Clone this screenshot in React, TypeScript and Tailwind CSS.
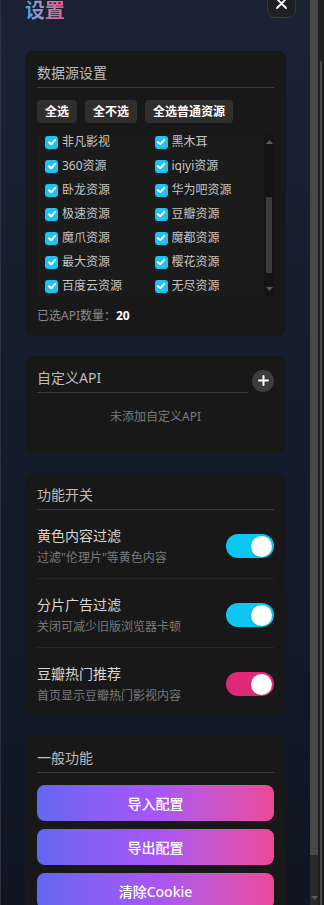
import { useEffect, useRef, useState } from "react";

const initialSources = [
  { name: "电影天堂资源", on: true },
  { name: "如意资源", on: true },
  { name: "暴风资源", on: true },
  { name: "天涯资源", on: true },
  { name: "小猫咪资源", on: true },
  { name: "量子资源", on: false },
  { name: "光速资源", on: false },
  { name: "红牛资源", on: true },
  { name: "非凡影视", on: true },
  { name: "黑木耳", on: true },
  { name: "360资源", on: true },
  { name: "iqiyi资源", on: true },
  { name: "卧龙资源", on: true },
  { name: "华为吧资源", on: true },
  { name: "极速资源", on: true },
  { name: "豆瓣资源", on: true },
  { name: "魔爪资源", on: true },
  { name: "魔都资源", on: true },
  { name: "最大资源", on: true },
  { name: "樱花资源", on: true },
  { name: "百度云资源", on: true },
  { name: "无尽资源", on: true },
  { name: "旺旺短剧", on: false },
  { name: "iKun资源", on: false },
];

function Arrow({ up }: { up?: boolean }) {
  return (
    <svg width="7" height="4" viewBox="0 0 7 4" className="mx-auto">
      <path d={up ? "M0 4 3.5 0 7 4Z" : "M0 0 3.5 4 7 0Z"} fill="#5a5a5a" />
    </svg>
  );
}

function Check({ on, onClick }: { on: boolean; onClick: () => void }) {
  return (
    <span
      onClick={onClick}
      className={
        on
          ? "flex h-[13px] w-[13px] shrink-0 items-center justify-center rounded-[3px] bg-[#1fc3ee]"
          : "flex h-[13px] w-[13px] shrink-0 items-center justify-center rounded-[3px] border border-[#777] bg-[#222]"
      }
    >
      {on && (
        <svg width="10" height="10" viewBox="0 0 10 10">
          <path d="M2 5.2 4.2 7.3 8.2 2.8" fill="none" stroke="#fff" strokeWidth="1.9" strokeLinecap="round" strokeLinejoin="round" />
        </svg>
      )}
    </span>
  );
}

function Toggle({ on, color, onClick }: { on: boolean; color: string; onClick: () => void }) {
  return (
    <button
      onClick={onClick}
      className={`flex h-6 w-12 shrink-0 items-center rounded-full px-[2px] ${on ? `justify-end ${color}` : "justify-start bg-[#3a3a3a]"}`}
    >
      <span className="h-[21px] w-[21px] rounded-full bg-white shadow" />
    </button>
  );
}

function CardTitle({ children }: { children: React.ReactNode }) {
  return (
    <h3 className="border-b border-[#3a3a3a] pb-1 text-[14px] leading-5 text-[#bdbdbd]">{children}</h3>
  );
}

export default function App() {
  const panelRef = useRef<HTMLDivElement>(null);
  const listRef = useRef<HTMLDivElement>(null);
  const [sources, setSources] = useState(initialSources);
  const [toggles, setToggles] = useState({ yellow: true, ads: true, douban: true });

  useEffect(() => {
    if (panelRef.current) panelRef.current.scrollTop = 27;
    if (listRef.current) listRef.current.scrollTop = 101;
  }, []);

  const count = sources.filter((s) => s.on).length;
  const setAll = (on: boolean) => setSources(sources.map((s) => ({ ...s, on })));

  const switches = [
    { key: "yellow" as const, title: "黄色内容过滤", desc: "过滤\"伦理片\"等黄色内容", color: "bg-[#0dc6f4]" },
    { key: "ads" as const, title: "分片广告过滤", desc: "关闭可减少旧版浏览器卡顿", color: "bg-[#0dc6f4]" },
    { key: "douban" as const, title: "豆瓣热门推荐", desc: "首页显示豆瓣热门影视内容", color: "bg-[#de2a78]" },
  ];

  return (
    <div
      className="flex h-[905px] w-[324px] overflow-hidden bg-[#1e1e1e]"
      style={{ fontFamily: '"Noto Sans", "Noto Sans CJK SC", sans-serif' }}
    >
      <div
        ref={panelRef}
        className="relative h-full w-[310px] shrink-0 overflow-hidden border-l border-[#2b3342] bg-linear-to-b from-[#1a2234] to-[#0f1622]"
      >
        <div className="p-6">
          <button className="absolute right-[14px] top-[16px] flex h-[29px] w-[29px] items-center justify-center rounded-lg border border-[#3a3a3a] bg-[#1f2024]">
            <svg width="11" height="11" viewBox="0 0 11 11">
              <path d="M1 1 10 10M10 1 1 10" stroke="#fff" strokeWidth="1.8" strokeLinecap="round" />
            </svg>
          </button>

          <h2 className="mb-[26px] w-fit bg-linear-to-r from-[#35a6e6] to-[#f0508c] bg-clip-text text-[20px] font-bold leading-7 text-transparent">
            设置
          </h2>

          <div className="flex flex-col gap-5">
            {/* data sources */}
            <section className="rounded-lg bg-[#181818] p-3">
              <CardTitle>数据源设置</CardTitle>
              <div className="mt-3 flex gap-2">
                <button onClick={() => setAll(true)} className="rounded bg-[#2e2e2e] px-2 py-1 text-[12px] font-semibold leading-[15px] text-white">
                  全选
                </button>
                <button onClick={() => setAll(false)} className="rounded bg-[#2e2e2e] px-2 py-1 text-[12px] font-semibold leading-[15px] text-white">
                  全不选
                </button>
                <button className="rounded bg-[#2e2e2e] px-2 py-1 text-[12px] font-semibold leading-[15px] text-white">
                  全选普通资源
                </button>
              </div>

              <div className="mt-3 flex h-[161px] bg-[#1b1b1b]">
                <div ref={listRef} className="flex-1 overflow-hidden pl-2">
                  <div className="grid grid-cols-2">
                    {sources.map((s, i) => (
                      <label key={s.name} className="flex h-6 items-center gap-1 text-[12px] text-[#c4c4c4]">
                        <Check
                          on={s.on}
                          onClick={() => setSources(sources.map((x, j) => (j === i ? { ...x, on: !x.on } : x)))}
                        />
                        <span className="truncate">{s.name}</span>
                      </label>
                    ))}
                  </div>
                </div>
                <div className="flex w-[10px] flex-col bg-[#141414] py-[5px]">
                  <Arrow up />
                  <div className="flex-1 px-[2px] pt-[6px]">
                    <div className="mt-[47px] h-[76px] bg-[#3c3c3c]" />
                  </div>
                  <Arrow />
                </div>
              </div>

              <p className="mt-3 text-[12px] leading-4 text-[#8a8a8a]">
                已选API数量：<span className="font-bold text-white">{count}</span>
              </p>
            </section>

            {/* custom api */}
            <section className="rounded-lg bg-[#181818] p-3">
              <div className="flex items-center gap-1">
                <div className="flex-1">
                  <CardTitle>自定义API</CardTitle>
                </div>
                <button className="flex h-[22px] w-[22px] items-center justify-center rounded-full bg-[#3d3d3d]">
                  <svg width="11" height="11" viewBox="0 0 11 11">
                    <path d="M5.5 1v9M1 5.5h9" stroke="#fff" strokeWidth="2" strokeLinecap="round" />
                  </svg>
                </button>
              </div>
              <p className="py-4 text-center text-[12px] leading-4 text-[#7a7a7a]">未添加自定义API</p>
            </section>

            {/* switches */}
            <section className="rounded-lg bg-[#181818] p-3">
              <CardTitle>功能开关</CardTitle>
              {switches.map((s, i) => (
                <div
                  key={s.key}
                  className={`flex items-center justify-between pt-4 ${i < switches.length - 1 ? "border-b border-[#262626] pb-3" : ""}`}
                >
                  <div>
                    <div className="text-[14px] leading-5 text-[#d6d6d6]">{s.title}</div>
                    <div className="mt-1 text-[12px] leading-4 text-[#7a7a7a]">{s.desc}</div>
                  </div>
                  <Toggle
                    on={toggles[s.key]}
                    color={s.color}
                    onClick={() => setToggles({ ...toggles, [s.key]: !toggles[s.key] })}
                  />
                </div>
              ))}
            </section>

            {/* general */}
            <section className="rounded-lg bg-[#181818] p-3">
              <CardTitle>一般功能</CardTitle>
              <div className="mt-3 flex flex-col gap-2">
                {["导入配置", "导出配置", "清除Cookie"].map((t) => (
                  <button
                    key={t}
                    className="h-9 rounded-lg bg-linear-to-r from-[#6366f1] via-[#a855f7] to-[#ec4899] text-[14px] font-medium text-white"
                  >
                    {t}
                  </button>
                ))}
              </div>
            </section>
          </div>
        </div>
      </div>

      {/* panel scrollbar */}
      <div className="flex h-full w-[8px] shrink-0 flex-col bg-[#2a2a2a]">
        <div className="h-[855px] bg-[#474747]" />
        <div className="flex flex-1 flex-col justify-end pb-[5px]">
          <Arrow />
        </div>
      </div>

      {/* page scrollbar */}
      <div className="flex h-full w-[6px] shrink-0 flex-col bg-[#1e1e1e] pl-[2px] pt-[61px]">
        <div className="h-full w-[2px] bg-[#4a4a4a]" />
      </div>
    </div>
  );
}
